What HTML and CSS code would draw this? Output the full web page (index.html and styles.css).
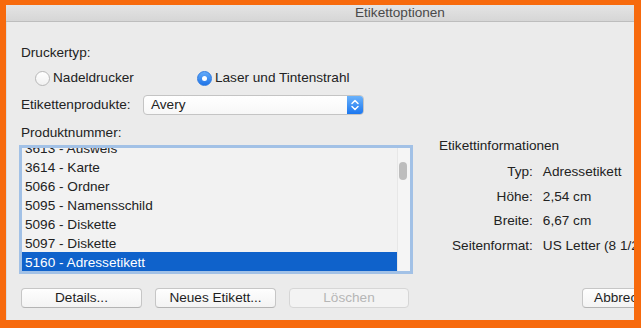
FILE: index.html
```html
<!DOCTYPE html>
<html lang="de">
<head>
<meta charset="utf-8">
<title>Etikettoptionen</title>
<link rel="stylesheet" href="styles.css">
</head>
<body>
<div class="window">
  <div class="titlebar">Etikettoptionen</div>
  <div class="content">
    <div class="label">Druckertyp:</div>
    <div class="radios">
      <div class="radio-opt first"><span class="radio"></span>Nadeldrucker</div>
      <div class="radio-opt"><span class="radio checked"></span>Laser und Tintenstrahl</div>
    </div>
    <div class="popup-row">
      <span class="popup-label">Etikettenprodukte:</span>
      <div class="popup">
        <span class="popup-text">Avery</span>
        <span class="popup-arrows">
          <svg width="16" height="18" viewBox="0 0 16 18"><path d="M5 7.5 L8 4.5 L11 7.5 M5 10.5 L8 13.5 L11 10.5" fill="none" stroke="#fff" stroke-width="1.5" stroke-linecap="round" stroke-linejoin="round"/></svg>
        </span>
      </div>
    </div>
    <div class="main">
      <div class="left">
        <div class="label">Produktnummer:</div>
        <div class="listbox">
          <div class="list-area">
            <div class="rows">
              <div class="row">3613 - Ausweis</div>
              <div class="row">3614 - Karte</div>
              <div class="row">5066 - Ordner</div>
              <div class="row">5095 - Namensschild</div>
              <div class="row">5096 - Diskette</div>
              <div class="row">5097 - Diskette</div>
              <div class="row selected">5160 - Adressetikett</div>
            </div>
          </div>
          <div class="scrolltrack"><div class="thumb"></div></div>
        </div>
      </div>
      <div class="info">
        <div class="info-title">Etikettinformationen</div>
        <div class="info-grid">
          <span class="k">Typ:</span><span class="v">Adressetikett</span>
          <span class="k">Höhe:</span><span class="v">2,54 cm</span>
          <span class="k">Breite:</span><span class="v">6,67 cm</span>
          <span class="k">Seitenformat:</span><span class="v">US Letter (8 1/2 x 11 Zoll)</span>
        </div>
      </div>
    </div>
    <div class="buttons">
      <div class="btn">Details...</div>
      <div class="btn">Neues Etikett...</div>
      <div class="btn disabled">Löschen</div>
      <div class="btn cancel">Abbrechen</div>
    </div>
  </div>
</div>
</body>
</html>
```

FILE: styles.css
```css
html, body {
  margin: 0;
  padding: 0;
}
body {
  background: #f76a0d;
  width: 641px;
  height: 328px;
  box-sizing: border-box;
  padding: 5px 0 0 6px;
  overflow: hidden;
  font-family: "Liberation Sans", Arial, sans-serif;
  font-size: 13.6px;
  color: #222;
}
.window {
  width: 628px;
  height: 315px;
  background: #ebebeb;
  overflow: hidden;
  box-shadow: inset 1px 0 0 #dcdcdc;
}
.titlebar {
  height: 16px;
  line-height: 16px;
  background: linear-gradient(#e4e4e4, #d6d6d6);
  border-bottom: 1px solid #bdbdbd;
  padding-left: 349px;
  color: #4a4a4a;
  white-space: nowrap;
}
.content {
  padding: 23px 0 0 15px;
}
.label {
  height: 16px;
  line-height: 16px;
}
.radios {
  margin-top: 8px;
  height: 18px;
  display: flex;
  align-items: center;
  padding-left: 14px;
}
.radio-opt {
  display: flex;
  align-items: center;
  line-height: 16px;
}
.radio-opt.first {
  width: 162px;
}
.radio {
  width: 15px;
  height: 15px;
  box-sizing: border-box;
  border-radius: 50%;
  border: 1px solid #b8b8b8;
  background: linear-gradient(#ffffff, #f1f1f1);
  margin-right: 3px;
  display: flex;
  align-items: center;
  justify-content: center;
}
.radio.checked {
  border-color: #2f7be0;
  background: linear-gradient(#64abf9, #1e74e8);
}
.radio.checked::after {
  content: "";
  width: 5px;
  height: 5px;
  border-radius: 50%;
  background: #fff;
}
.popup-row {
  margin-top: 8px;
  height: 20px;
  display: flex;
  align-items: center;
}
.popup-label {
  width: 122px;
  line-height: 16px;
}
.popup {
  width: 221px;
  height: 20px;
  box-sizing: border-box;
  border: 1px solid #c4c4c4;
  border-radius: 4px;
  background: linear-gradient(#ffffff, #f7f7f7);
  display: flex;
  align-items: center;
  overflow: hidden;
}
.popup-text {
  flex: 1;
  padding-left: 7px;
  line-height: 16px;
}
.popup-arrows {
  width: 16px;
  height: 18px;
  background: linear-gradient(#6ab2fb, #1c77ef);
  display: flex;
}
.main {
  margin-top: 10px;
  display: flex;
}
.left {
  width: 392px;
}
.listbox {
  margin-top: 4px;
  margin-left: -2px;
  width: 394px;
  height: 129px;
  box-sizing: border-box;
  border: 3px solid #a2c1e6;
  display: flex;
}
.list-area {
  width: 375px;
  height: 123px;
  background: #f2f2f2;
  overflow: hidden;
}
.rows {
  margin-top: -10px;
}
.row {
  height: 19px;
  box-sizing: border-box;
  padding: 2px 0 0 3px;
  line-height: 17px;
  white-space: nowrap;
}
.row.selected {
  background: #0f62cb;
  color: #fff;
}
.scrolltrack {
  width: 13px;
  height: 123px;
  box-sizing: border-box;
  background: #f5f5f5;
  border-left: 1px solid #e7e7e7;
}
.thumb {
  margin: 14px 0 0 1px;
  width: 8px;
  height: 18px;
  border-radius: 4px;
  background: #bdbdbd;
}
.info {
  margin-left: 26px;
  padding-top: 13px;
  white-space: nowrap;
}
.info-title {
  line-height: 16px;
}
.info-grid {
  margin-top: 10px;
  margin-left: 13px;
  display: grid;
  grid-template-columns: auto auto;
  column-gap: 10px;
  row-gap: 8.5px;
  line-height: 16px;
  justify-content: start;
}
.info-grid .k {
  text-align: right;
}
.buttons {
  margin-top: 14px;
  display: flex;
}
.btn {
  flex-shrink: 0;
  width: 121px;
  height: 20px;
  box-sizing: border-box;
  border: 1px solid #c6c6c6;
  border-bottom-color: #b4b4b4;
  border-radius: 4px;
  background: linear-gradient(#fefefe, #f3f3f3);
  text-align: center;
  line-height: 18px;
  color: #1e1e1e;
  margin-right: 13px;
  white-space: nowrap;
}
.btn.disabled {
  width: 120px;
  background: #f3f3f3;
  border-color: #d6d6d6;
  color: #b6b6b6;
  margin-right: 0;
}
.btn.cancel {
  width: 90px;
  margin-left: 173px;
}
```
